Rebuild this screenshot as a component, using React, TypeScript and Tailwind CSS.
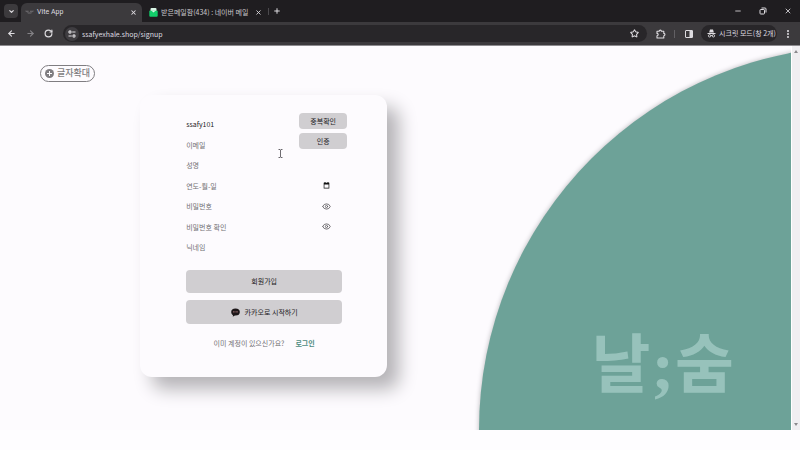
import React from "react";
import {
  ArrowLeft,
  ArrowRight,
  ChevronDown,
  Eye,
  Minus,
  MoreVertical,
  Plus,
  RotateCw,
  Star,
  X,
} from "lucide-react";

function TabBar() {
  return (
    <div className="flex h-[22px] items-end bg-[#1f1d20] pl-1 text-[#dedce0]">
      <button type="button" aria-label="탭 검색" className="mb-1 flex h-[14px] w-[14px] items-center justify-center rounded bg-[#3c3a3d]">
        <ChevronDown size={7} strokeWidth={4} />
      </button>
      <div className="ml-[3px] flex h-[19px] w-[121px] items-center rounded-t-md bg-[#3c3a3d] pr-[5px] pl-1">
        <svg width="9" height="5" viewBox="0 0 9 5" className="text-[#737175]" aria-hidden="true">
          <path d="M0 .8h3.6v1H1zM5 .8h4l-1 1H5zM1.5 2.4h6L6 3.4H3.2z" fill="currentColor" />
        </svg>
        <span className="ml-[3px] flex-1 text-[7px]">Vite App</span>
        <button type="button" aria-label="탭 닫기">
          <X size={7} strokeWidth={3.5} />
        </button>
      </div>
      <div className="flex h-[19px] w-[126px] items-center pr-[6px] pl-[7px]">
        <svg width="9" height="9" viewBox="0 0 9 9" aria-hidden="true">
          <rect x="1.500" y="0" width="6" height="5" rx="1" fill="#d9f7e6" />
          <path d="M.3 2.800h8.400v5a1 1 0 0 1-1 1H1.300a1 1 0 0 1-1-1z" fill="#12ce6a" />
          <path d="M2.500 2.800l2 1.600 2-1.600z" fill="#d9f7e6" />
        </svg>
        <span className="ml-[3px] flex-1 font-['Noto_Sans_CJK_KR',sans-serif] text-[7px] whitespace-nowrap text-[#c9c7cb]">받은메일함(434) : 네이버 메일</span>
        <button type="button" aria-label="탭 닫기">
          <X size={7} strokeWidth={3} />
        </button>
      </div>
      <div className="mb-[7px] h-[7px] w-px bg-[#4b494d]" />
      <button type="button" aria-label="새 탭" className="mb-[7px] ml-1">
        <Plus size={8} strokeWidth={3} />
      </button>
      <div className="mb-[7px] ml-auto flex items-center gap-[17px] pr-2">
        <button type="button" aria-label="최소화">
          <Minus size={8} strokeWidth={2.5} />
        </button>
        <button type="button" aria-label="이전 크기로 복원">
          <svg width="8" height="8" viewBox="0 0 8 8" fill="none" stroke="currentColor" strokeWidth="1" aria-hidden="true">
            <rect x="1" y="2.500" width="4.500" height="4.500" rx=".7" />
            <path d="M2.500 1h3.500a1 1 0 0 1 1 1v3.500" />
          </svg>
        </button>
        <button type="button" aria-label="닫기">
          <X size={8} strokeWidth={2.5} />
        </button>
      </div>
    </div>
  );
}

function Toolbar() {
  return (
    <div className="flex h-[24px] items-center border-b border-[#8d8b8f] bg-[#3c3a3d] pr-[7px] pl-[7px] text-[#dedce0]">
      <button type="button" aria-label="뒤로">
        <ArrowLeft size={9} strokeWidth={3} />
      </button>
      <button type="button" aria-label="앞으로" className="ml-[10px] text-[#848286]">
        <ArrowRight size={9} strokeWidth={3} />
      </button>
      <button type="button" aria-label="새로고침" className="ml-[9px]">
        <RotateCw size={9} strokeWidth={3.2} />
      </button>
      <div className="ml-[10px] flex h-[17px] flex-1 items-center rounded-full bg-[#282629] pr-2 pl-[2px]">
        <button type="button" aria-label="사이트 정보" className="flex h-[14px] w-[14px] items-center justify-center rounded-full bg-[#3f3d41]">
          <svg width="8" height="8" viewBox="0 0 8 8" fill="none" stroke="currentColor" strokeWidth="1.100" aria-hidden="true">
            <circle cx="2" cy="2" r="1.100" />
            <path d="M4.200 2H7.500M.5 6h3.300" />
            <circle cx="6" cy="6" r="1.100" />
          </svg>
        </button>
        <input
          aria-label="주소창"
          defaultValue="ssafyexhale.shop/signup"
          className="ml-[3px] min-w-0 flex-1 bg-transparent font-['Noto_Sans_CJK_KR',sans-serif] text-[7px] leading-[12px] outline-none"
        />
        <button type="button" aria-label="북마크">
          <Star size={9} strokeWidth={2.8} />
        </button>
      </div>
      <button type="button" aria-label="확장 프로그램" className="ml-[9px]">
        <svg width="10" height="10" viewBox="0 0 10 10" fill="none" stroke="currentColor" strokeWidth="1.100" strokeLinejoin="round" aria-hidden="true">
          <path d="M1 2.200h2.200a1.100 1.100 0 0 1 2.200 0h2.400v2.200a1.100 1.100 0 0 1 0 2.300V9H1V6.800a1.200 1.200 0 0 0 0-2.400z" />
        </svg>
      </button>
      <div className="ml-[8px] h-2 w-px bg-[#626064]" />
      <button type="button" aria-label="측면 패널" className="ml-[10px]">
        <svg width="8" height="8" viewBox="0 0 8 8" aria-hidden="true">
          <rect x=".5" y=".5" width="7" height="7" rx=".5" fill="none" stroke="currentColor" />
          <path d="M4.500 .5h3v7h-3z" fill="currentColor" />
        </svg>
      </button>
      <button type="button" className="ml-[8px] flex h-[17px] w-[76px] items-center gap-[3px] rounded-full bg-[#282629] pl-[6px] font-['Noto_Sans_CJK_KR',sans-serif] text-[7px] whitespace-nowrap">
        <svg width="9" height="9" viewBox="0 0 9 9" fill="currentColor" aria-hidden="true">
          <path d="M3 .6h3l.9 3H2.100zM.5 4h8v.9h-8z" />
          <circle cx="2.600" cy="6.800" r="1.200" fill="none" stroke="currentColor" strokeWidth=".9" />
          <circle cx="6.400" cy="6.800" r="1.200" fill="none" stroke="currentColor" strokeWidth=".9" />
          <path d="M3.500 6.200h2v.8h-2z" />
        </svg>
        시크릿 모드(창 2개)
      </button>
      <button type="button" aria-label="메뉴" className="ml-[6px]">
        <MoreVertical size={10} strokeWidth={3} />
      </button>
    </div>
  );
}

type FieldProps = {
  id: string;
  label: string;
  value?: string;
  action?: string;
  icon?: "calendar" | "eye";
};

const fields: FieldProps[] = [
  { id: "user-id", label: "아이디", value: "ssafy101", action: "중복확인" },
  { id: "email", label: "이메일", action: "인증" },
  { id: "name", label: "성명" },
  { id: "birth", label: "연도-월-일", icon: "calendar" },
  { id: "password", label: "비밀번호", icon: "eye" },
  { id: "password-check", label: "비밀번호 확인", icon: "eye" },
  { id: "nickname", label: "닉네임" },
];

function Field({ id, label, value, action, icon }: FieldProps) {
  return (
    <div className="flex">
      <input
        id={id}
        aria-label={label}
        type={icon === "eye" ? "password" : "text"}
        placeholder={label}
        defaultValue={value}
        className="h-[18px] w-[113px] self-end bg-transparent text-[7px] text-[#1d1b1e] outline-none placeholder:text-[#727074]"
      />
      {action && (
        <button type="button" className="h-4 w-12 rounded bg-[#d0ced1] text-[7px] text-[#1d1b1e]">
          {action}
        </button>
      )}
      {icon === "calendar" && (
        <button type="button" aria-label="날짜 선택" className="ml-[23px] flex h-[18px] w-2 items-center justify-center self-end">
          <svg width="7" height="7" viewBox="0 0 7 7" aria-hidden="true">
            <path d="M1.500 0h1v.7h2V0h1v.7h.8v5.800H.7V.7h.8zM1.400 2.400v3.400h4.200V2.400z" fill="#111" fillRule="evenodd" />
          </svg>
        </button>
      )}
      {icon === "eye" && (
        <button type="button" aria-label="비밀번호 표시" className="ml-[23px] flex h-[18px] w-2 items-center justify-center self-end text-[#5b595d]">
          <Eye size={9} strokeWidth={2.2} className="shrink-0" />
        </button>
      )}
    </div>
  );
}

function SignupCard() {
  return (
    <form className="w-[247px] rounded-xl bg-[#fdfbfe] pt-[18px] pb-[26px] pl-[46px] font-['Noto_Sans_CJK_KR',sans-serif] shadow-[12px_12px_18px_#b5b3b7]">
      <div className="grid h-[143px] grid-rows-7">
        {fields.map((field) => (
          <Field key={field.id} {...field} />
        ))}
      </div>
      <div className="mt-[14px] flex w-[156px] flex-col gap-[7px] text-[7px] text-[#1d1b1e]">
        <button type="submit" className="h-[23px] rounded bg-[#d0ced1]">
          회원가입
        </button>
        <button type="button" className="flex h-[24px] items-center justify-center gap-[5px] rounded bg-[#d0ced1]">
          <svg width="9" height="9" viewBox="0 0 9 9" aria-hidden="true">
            <ellipse cx="4.500" cy="4" rx="4.300" ry="3.600" fill="#1d1719" />
            <path d="M2 6.500L1.800 8.800l2.300-1.500z" fill="#1d1719" />
            <path d="M2 3.900h5" stroke="#a8797b" strokeWidth="1" strokeDasharray="1 .4" />
          </svg>
          카카오로 시작하기
        </button>
        <p className="mt-1 flex h-[16px] items-center justify-center gap-[11px] text-[#727074]">
          이미 계정이 있으신가요?
          <a href="#login" className="font-bold text-[#4d8b7e]">
            로그인
          </a>
        </p>
      </div>
    </form>
  );
}

function ScrollBar() {
  return (
    <div className="flex w-[9px] flex-col items-center justify-between border-l border-white bg-[#f0eef1] py-1 text-[#8b898d]">
      <svg width="4" height="3" viewBox="0 0 4 3" aria-hidden="true">
        <path d="M0 3l2-3 2 3z" fill="currentColor" />
      </svg>
      <svg width="4" height="3" viewBox="0 0 4 3" aria-hidden="true">
        <path d="M0 0l2 3 2-3z" fill="currentColor" />
      </svg>
    </div>
  );
}

export default function App() {
  return (
    <div className="flex min-h-screen flex-col bg-[#fefdff] pb-5 font-['Roboto','Noto_Sans_CJK_KR',sans-serif]">
      <TabBar />
      <Toolbar />
      <div className="flex flex-1">
        <main className="relative flex-1 overflow-hidden bg-[#fdfbfe]">
          <div className="w-2/3 pb-10">
            <button
              type="button"
              className="mt-[19px] ml-10 flex h-[17px] items-center gap-[3px] rounded-full border border-[#7f7d81] px-[4px] text-[9px] leading-[15px] font-medium text-[#7f7d81]"
            >
              <svg width="9" height="9" viewBox="0 0 9 9" aria-hidden="true">
                <circle cx="4.500" cy="4.500" r="4.500" fill="#7f7d81" />
                <path d="M4.500 2v5M2 4.500h5" stroke="#fdfbfe" strokeWidth="1" />
              </svg>
              글자확대
            </button>
            <div className="mt-[13px] flex justify-center">
              <SignupCard />
            </div>
          </div>

          {/* Decorative circle, clipped by the lower right corner of the page */}
          <div className="absolute top-0 left-[479px] aspect-square h-[200%] rounded-full bg-[#6da298] shadow-[0_0_5px_#bab8bc]" />
          <div className="absolute right-[57px] bottom-6 flex items-center gap-px text-[64px] leading-[80px] font-bold text-[#97c2bb]">
            <span>날</span>
            <span className="font-['Liberation_Serif',serif] text-[68px]">;</span>
            <span>숨</span>
          </div>

          {/* Text cursor hovering over the form */}
          <svg className="absolute top-[103px] left-[278px]" width="5" height="9" viewBox="0 0 5 9" aria-hidden="true">
            <path d="M.5 .5h1.500l.5.5.5-.5h1.500M2.500 1v7M.5 8.500h1.500l.5-.5.5.5h1.500" fill="none" stroke="#4a484c" strokeWidth=".8" />
          </svg>
        </main>
        <ScrollBar />
      </div>
    </div>
  );
}
